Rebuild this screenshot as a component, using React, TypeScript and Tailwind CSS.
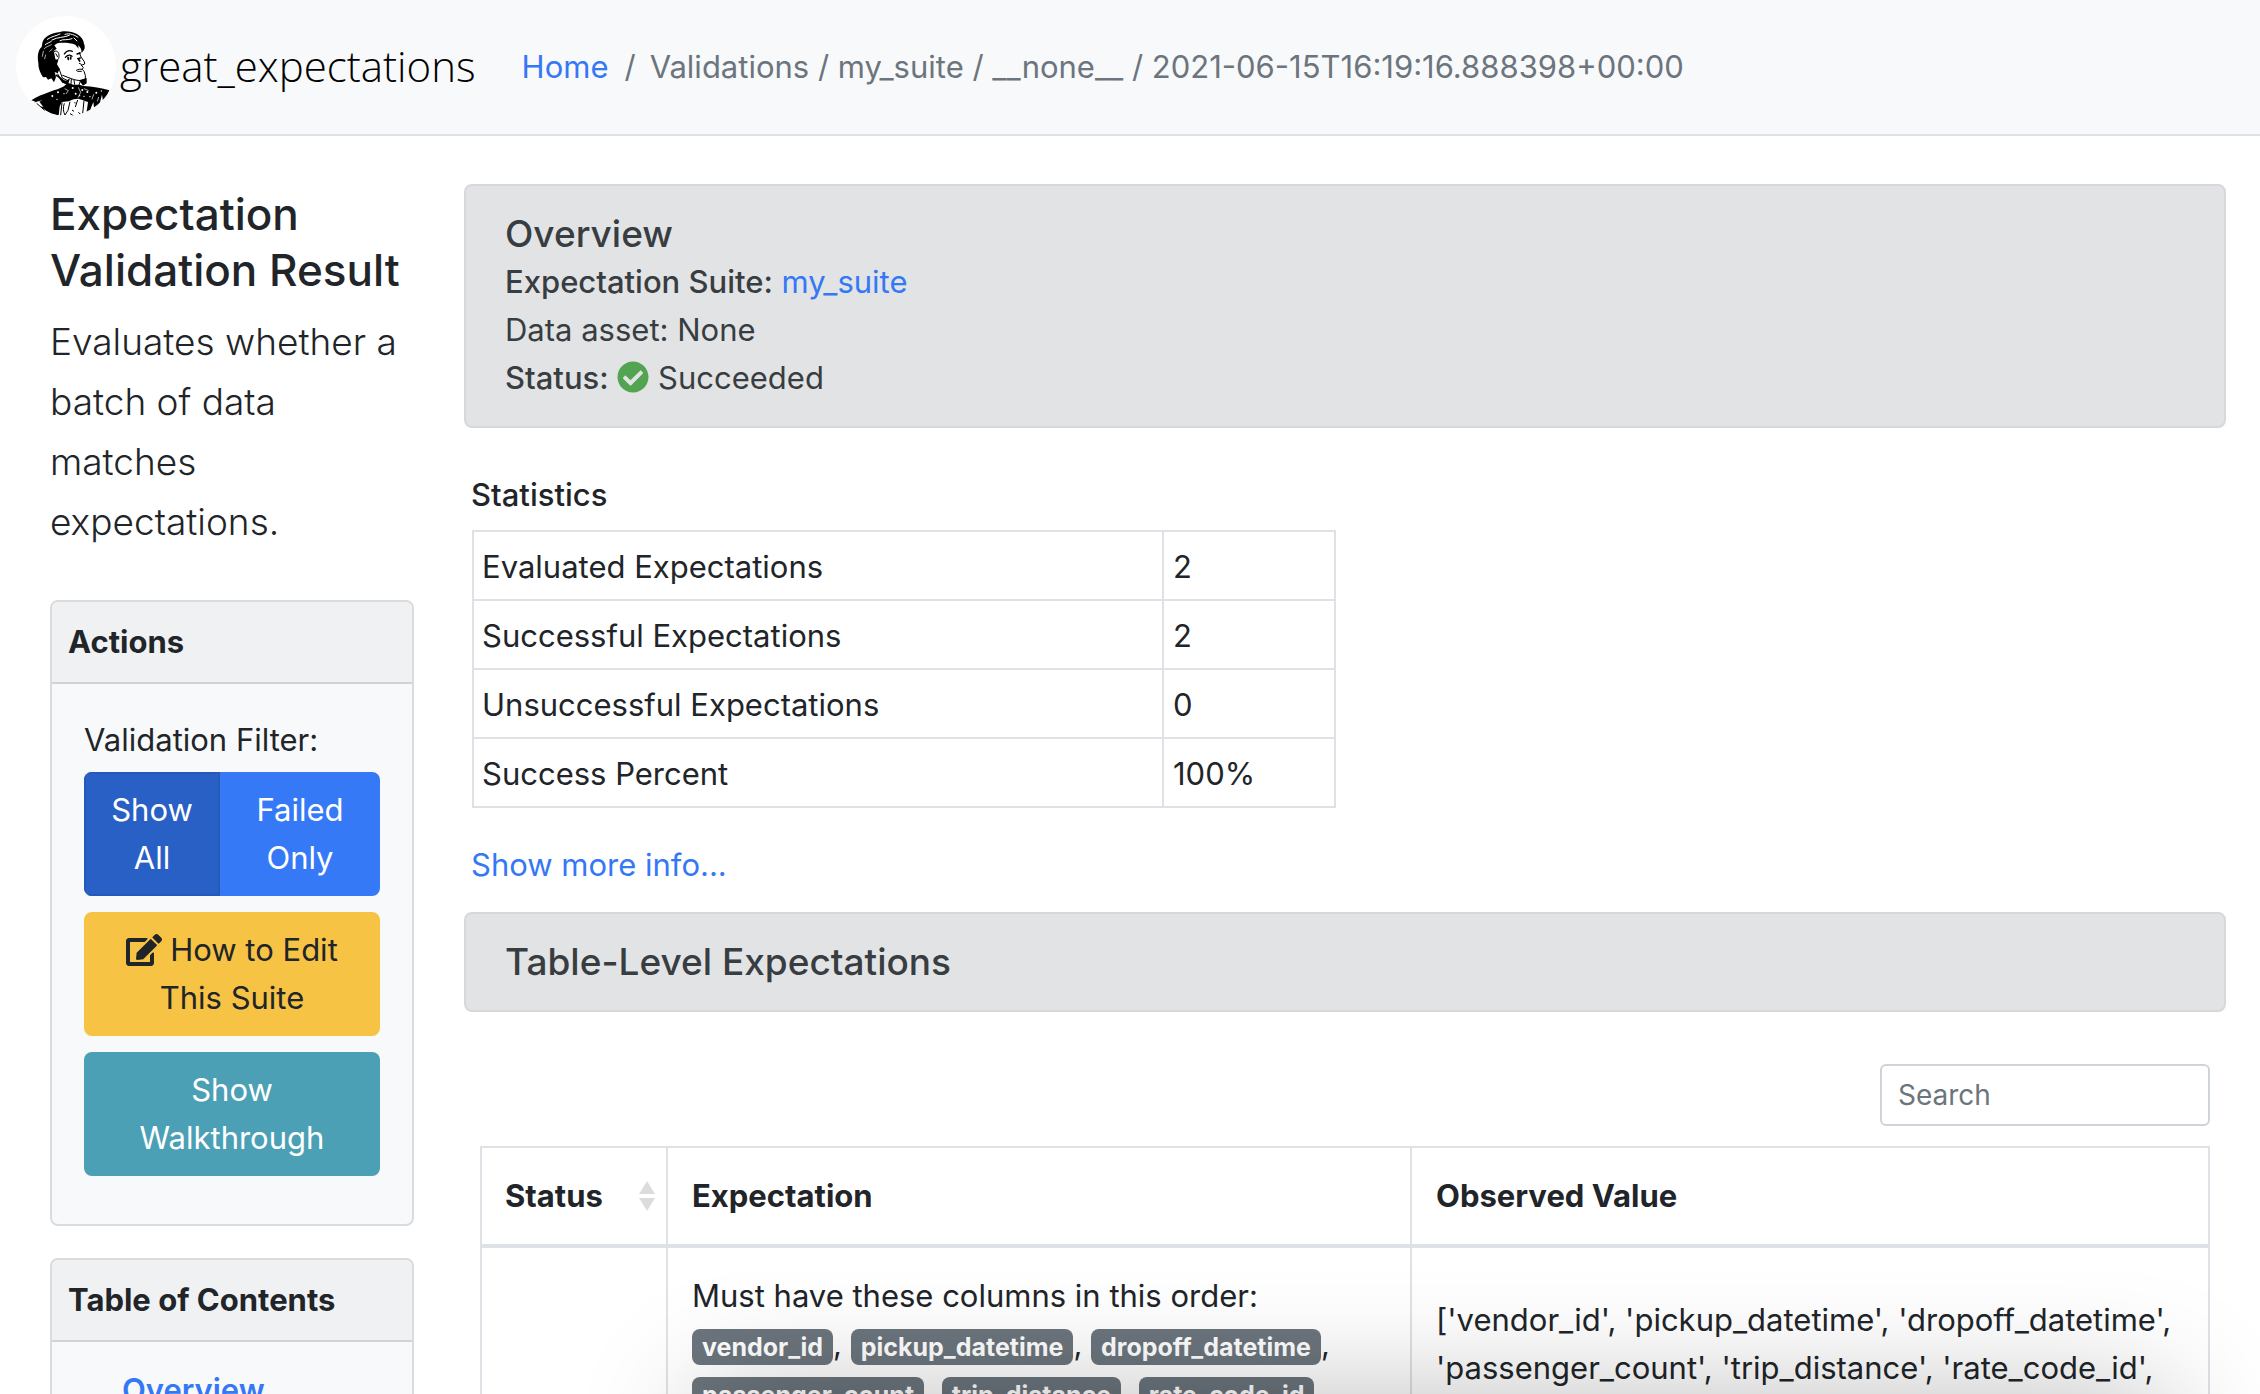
import type { ReactNode } from "react";
import { FaCheckCircle, FaEdit } from "react-icons/fa";

const stats: [string, string][] = [
  ["Evaluated Expectations", "2"],
  ["Successful Expectations", "2"],
  ["Unsuccessful Expectations", "0"],
  ["Success Percent", "100%"],
];

const columns = ["vendor_id", "pickup_datetime", "dropoff_datetime", "passenger_count", "trip_distance", "rate_code_id"];

function Portrait() {
  return (
    <svg viewBox="18 18 300 300" className="size-[100px] shrink-0" aria-hidden="true">
      <defs>
        <clipPath id="disc">
          <circle cx="168" cy="168" r="150" />
        </clipPath>
      </defs>
      <circle cx="168" cy="168" r="150" fill="#fff" />
      <g clipPath="url(#disc)">
        {/* hair */}
        <path d="M97 98 C101 82 122 70 146 67 C160 61 186 63 202 73 C214 80 221 91 222 101 C227 112 223 122 214 128 C216 119 211 111 204 106 L206 116 L196 104 C180 99 160 97 142 100 L133 106 L140 116 L130 124 L143 127 L141 140 L145 150 L141 163 L149 176 L143 190 L134 186 L138 202 L132 217 L124 205 L114 209 L108 201 L99 202 C90 188 84 172 85 158 C81 138 85 118 95 111 Z" fill="#000" />
        <g fill="none" stroke="#fff" strokeLinecap="round">
          <path d="M112 88 C126 78 140 78 150 72 M126 90 C144 80 160 84 178 76 M165 73 C180 68 196 76 204 82 M150 92 C160 86 172 92 186 86 M106 104 C112 98 118 99 124 94 M192 84 L201 93" strokeWidth="3" />
          <path d="M103 116 C110 108 117 109 124 104 M119 124 L127 117 M100 124 L97 139 M107 135 L104 146" strokeWidth="2" />
        </g>
        {/* ear */}
        <path d="M132 126 C139 119 148 126 147 139 C147 148 141 153 136 148" fill="#fff" stroke="#000" strokeWidth="3" />
        <path d="M137 130 L143 141" stroke="#000" strokeWidth="3" />
        {/* face */}
        <g fill="none" stroke="#000" strokeLinecap="round" strokeLinejoin="round">
          <path d="M208 128 L213 141 L223 155 L224 162 L214 166" strokeWidth="3" />
          <path d="M214 166 L220 172 L217 178 L222 184 L226 196 L226 207 C217 215 197 211 184 206 L158 196" strokeWidth="3" />
          <path d="M163 132 C169 123 178 120 187 124 M201 132 L211 129" strokeWidth="4" />
          <path d="M166 142 C173 134 180 134 186 139 M203 146 L211 144" strokeWidth="4" />
          <path d="M174 142 L175 148 M182 141 L182 147 M206 148 L209 153" strokeWidth="5" />
          <path d="M208 160 L214 163 M199 181 C206 176 211 178 216 178 M203 184 L214 184" strokeWidth="3" />
          <path d="M147 176 L157 204 L173 212 M184 207 L183 222 M192 211 L194 223 M211 214 L207 224 M143 192 L158 216" strokeWidth="3" />
          <path d="M138 196 C151 204 160 207 165 219" strokeWidth="4" />
        </g>
        <path d="M136 190 L153 207 L168 212 L180 205 L174 224 L157 218 Z M207 211 L230 204 L230 220 L219 227 Z" fill="#000" />
        {/* coat and bow tie */}
        <path d="M64 271 C80 259 99 253 120 245 C136 240 150 236 162 229 L173 218 L190 224 L208 224 L220 228 C247 229 276 235 298 241 L291 258 L279 274 L276 254 L267 288 L253 302 L250 276 L243 293 L238 311 L229 311 L234 276 C225 272 214 269 205 266 L191 268 L176 274 L155 276 L149 290 L146 316 C125 314 105 301 91 289 L100 291 L88 275 L98 271 L78 275 Z" fill="#000" />
        <path d="M80 280 L104 301 M74 276 L84 271" stroke="#000" strokeWidth="3" />
        <g fill="#fff">
          <circle cx="127" cy="258" r="3" />
          <circle cx="144" cy="247" r="3" />
          <circle cx="141" cy="268" r="2" />
          <circle cx="162" cy="251" r="2" />
          <circle cx="188" cy="234" r="3" />
          <circle cx="197" cy="251" r="3" />
          <circle cx="217" cy="240" r="3" />
          <circle cx="209" cy="257" r="2" />
          <circle cx="232" cy="246" r="3" />
          <circle cx="240" cy="260" r="2" />
          <circle cx="259" cy="248" r="3" />
          <circle cx="274" cy="243" r="2" />
          <circle cx="222" cy="259" r="2" />
        </g>
        <path d="M164 236 L175 242 L168 252 M205 232 L212 247 L204 263 M222 236 L236 242 M246 268 L251 253 M262 274 L266 261" fill="none" stroke="#fff" strokeWidth="2" />
        {/* shirt */}
        <path d="M156 277 L152 316 M163 280 C158 294 160 306 165 315 L174 301 L180 275 M203 270 L196 291 M222 272 L218 311 M186 300 L192 304 M180 311 L190 317 M205 307 L214 315 M193 278 L197 279" fill="none" stroke="#000" strokeWidth="3" />
      </g>
    </svg>
  );
}

function Card({ title, children }: { title: string; children: ReactNode }) {
  return (
    <section className="rounded-lg border-2 border-[#d9dbdc] bg-[#f8f9fa]">
      <h2 className="rounded-t-md border-b-2 border-[#d0d2d3] bg-[#f0f1f2] px-4 py-4 text-[31px] leading-[48px] font-bold">{title}</h2>
      {children}
    </section>
  );
}

export default function App() {
  return (
    <div className="relative h-screen overflow-hidden bg-white font-[Inter,sans-serif] text-[31px] leading-[48px] text-[#212529]">
      <header className="flex items-center border-b-2 border-[#dee2e6] bg-[#f8f9fa] py-4 pl-4">
        <a href="#" className="flex items-center gap-1 pb-0.5 font-['Open_Sans',sans-serif] text-[42px] font-light text-black">
          <Portrait />
          great_expectations
        </a>
        <nav aria-label="Breadcrumb" className="ml-[46px]">
          <ol className="flex text-[#6c757d]">
            <li>
              <a href="#" className="text-[#3478f6]">Home</a>
            </li>
            <li className="before:pr-3.5 before:pl-4 before:content-['/']">Validations / my_suite / __none__ / 2021-06-15T16:19:16.888398+00:00</li>
          </ol>
        </nav>
      </header>

      <div className="flex gap-[50px] pt-12 pr-[34px] pl-[50px]">
        <aside className="w-[364px] shrink-0 pt-0.5">
          <h1 className="text-[44px] leading-[56px] font-medium">
            Expectation
            <br />
            <span className="whitespace-nowrap">Validation Result</span>
          </h1>
          <p className="mt-3.5 text-[37px] leading-[60px] font-light">Evaluates whether a batch of data matches expectations.</p>

          <div className="mt-12 flex flex-col gap-8">
            <Card title="Actions">
              <div className="px-8 pt-8 pb-12">
                <p>Validation Filter:</p>
                <div className="mt-2 flex overflow-hidden rounded-lg text-white">
                  <button className="w-[136px] border-2 border-[#255ab9] bg-[#2860c5] px-5 py-3">Show All</button>
                  <button className="flex-1 bg-[#3579f6] px-7 py-3.5">Failed Only</button>
                </div>
                <button className="mt-4 w-full rounded-lg bg-[#f6c344] px-6 py-3.5">
                  <FaEdit className="mr-2 -mt-1.5 inline h-8 w-9" />
                  How to Edit This Suite
                </button>
                <button className="mt-4 w-full rounded-lg bg-[#4ca0b5] px-6 py-3.5 text-white">Show Walkthrough</button>
              </div>
            </Card>
            <Card title="Table of Contents">
              <nav className="px-[70px] py-6">
                <a href="#overview" className="font-semibold text-[#3478f6]">Overview</a>
              </nav>
            </Card>
          </div>
        </aside>

        <main className="min-w-0 flex-1">
          <section id="overview" className="rounded-lg border-2 border-[#d6d8db] bg-[#e2e3e5] px-[39px] py-6 text-[#383d41]">
            <h2 className="text-[37px] font-medium">Overview</h2>
            <p>
              <span className="font-medium">Expectation Suite:</span>{" "}
              <a href="#" className="text-[#3478f6]">my_suite</a>
            </p>
            <p>Data asset: None</p>
            <p>
              <span className="font-medium">Status:</span>{" "}
              <FaCheckCircle className="-mt-2 inline size-8 text-[#53a451]" /> Succeeded
            </p>
          </section>

          <section className="pt-[43px] pl-[7px]">
            <h3 className="font-medium">Statistics</h3>
            <table className="mt-[11px] ml-px w-[864px] border-collapse">
              <tbody>
                {stats.map(([label, value]) => (
                  <tr key={label}>
                    <th scope="row" className="border-2 border-[#dee2e6] px-2 pt-[11px] pb-2 text-left font-normal">{label}</th>
                    <td className="w-[172px] border-2 border-[#dee2e6] px-[9px] pt-[11px] pb-2">{value}</td>
                  </tr>
                ))}
              </tbody>
            </table>
            <a href="#" className="mt-[33px] block text-[#3478f6]">Show more info...</a>
          </section>

          <h2 className="mt-[23px] rounded-lg border-2 border-[#d6d8db] bg-[#e2e3e5] px-[39px] py-6 text-[37px] font-medium text-[#383d41]">
            Table-Level Expectations
          </h2>

          <section className="mt-[52px] pr-4 pl-4">
            <div className="flex justify-end">
              <input
                type="search"
                aria-label="Search"
                placeholder="Search"
                className="h-[62px] w-[330px] rounded-md border-2 border-[#ced4da] bg-white px-4 text-[28px] placeholder:text-[#6c757d]"
              />
            </div>
            <table className="mt-5 w-full table-fixed border-collapse text-left">
              <thead>
                <tr>
                  <th className="w-[186px] border-2 border-b-4 border-[#dee2e6] py-6 pr-2.5 pl-[23px]">
                    <button className="flex w-full items-center justify-between font-bold">
                      Status
                      <svg viewBox="0 0 18 30" className="h-[30px] w-[18px]" fill="#dcdcdc" aria-hidden="true">
                        <path d="M9 0 L17 13 H1 Z M1 17 H17 L9 30 Z" />
                      </svg>
                    </button>
                  </th>
                  <th className="w-[744px] border-2 border-b-4 border-[#dee2e6] px-6 py-6">Expectation</th>
                  <th className="border-2 border-b-4 border-[#dee2e6] px-6 py-6">Observed Value</th>
                </tr>
              </thead>
              <tbody>
                <tr className="align-top">
                  <td className="border-2 border-[#dee2e6]" />
                  <td className="border-2 border-[#dee2e6] px-6 py-6">
                    Must have these columns in this order:
                    <br />
                    {columns.map((name, i) => (
                      <span key={name}>
                        <span className="inline-block rounded-lg bg-[#6c757d] px-2.5 align-[-1px] text-[25px] leading-9 font-bold text-white">{name}</span>
                        {i === 2 ? <>,<br /></> : ", "}
                      </span>
                    ))}
                  </td>
                  <td className="border-2 border-[#dee2e6] px-6 pt-12 pb-6">
                    ['vendor_id', 'pickup_datetime', 'dropoff_datetime', 'passenger_count', 'trip_distance', 'rate_code_id',
                  </td>
                </tr>
              </tbody>
            </table>
          </section>
        </main>
      </div>

      {/* shadow cast by a panel resting just below the window */}
      <div className="pointer-events-none absolute top-full right-[90px] left-[700px] h-40 shadow-[0_0_120px_rgba(0,0,0,0.26)]" />
    </div>
  );
}
